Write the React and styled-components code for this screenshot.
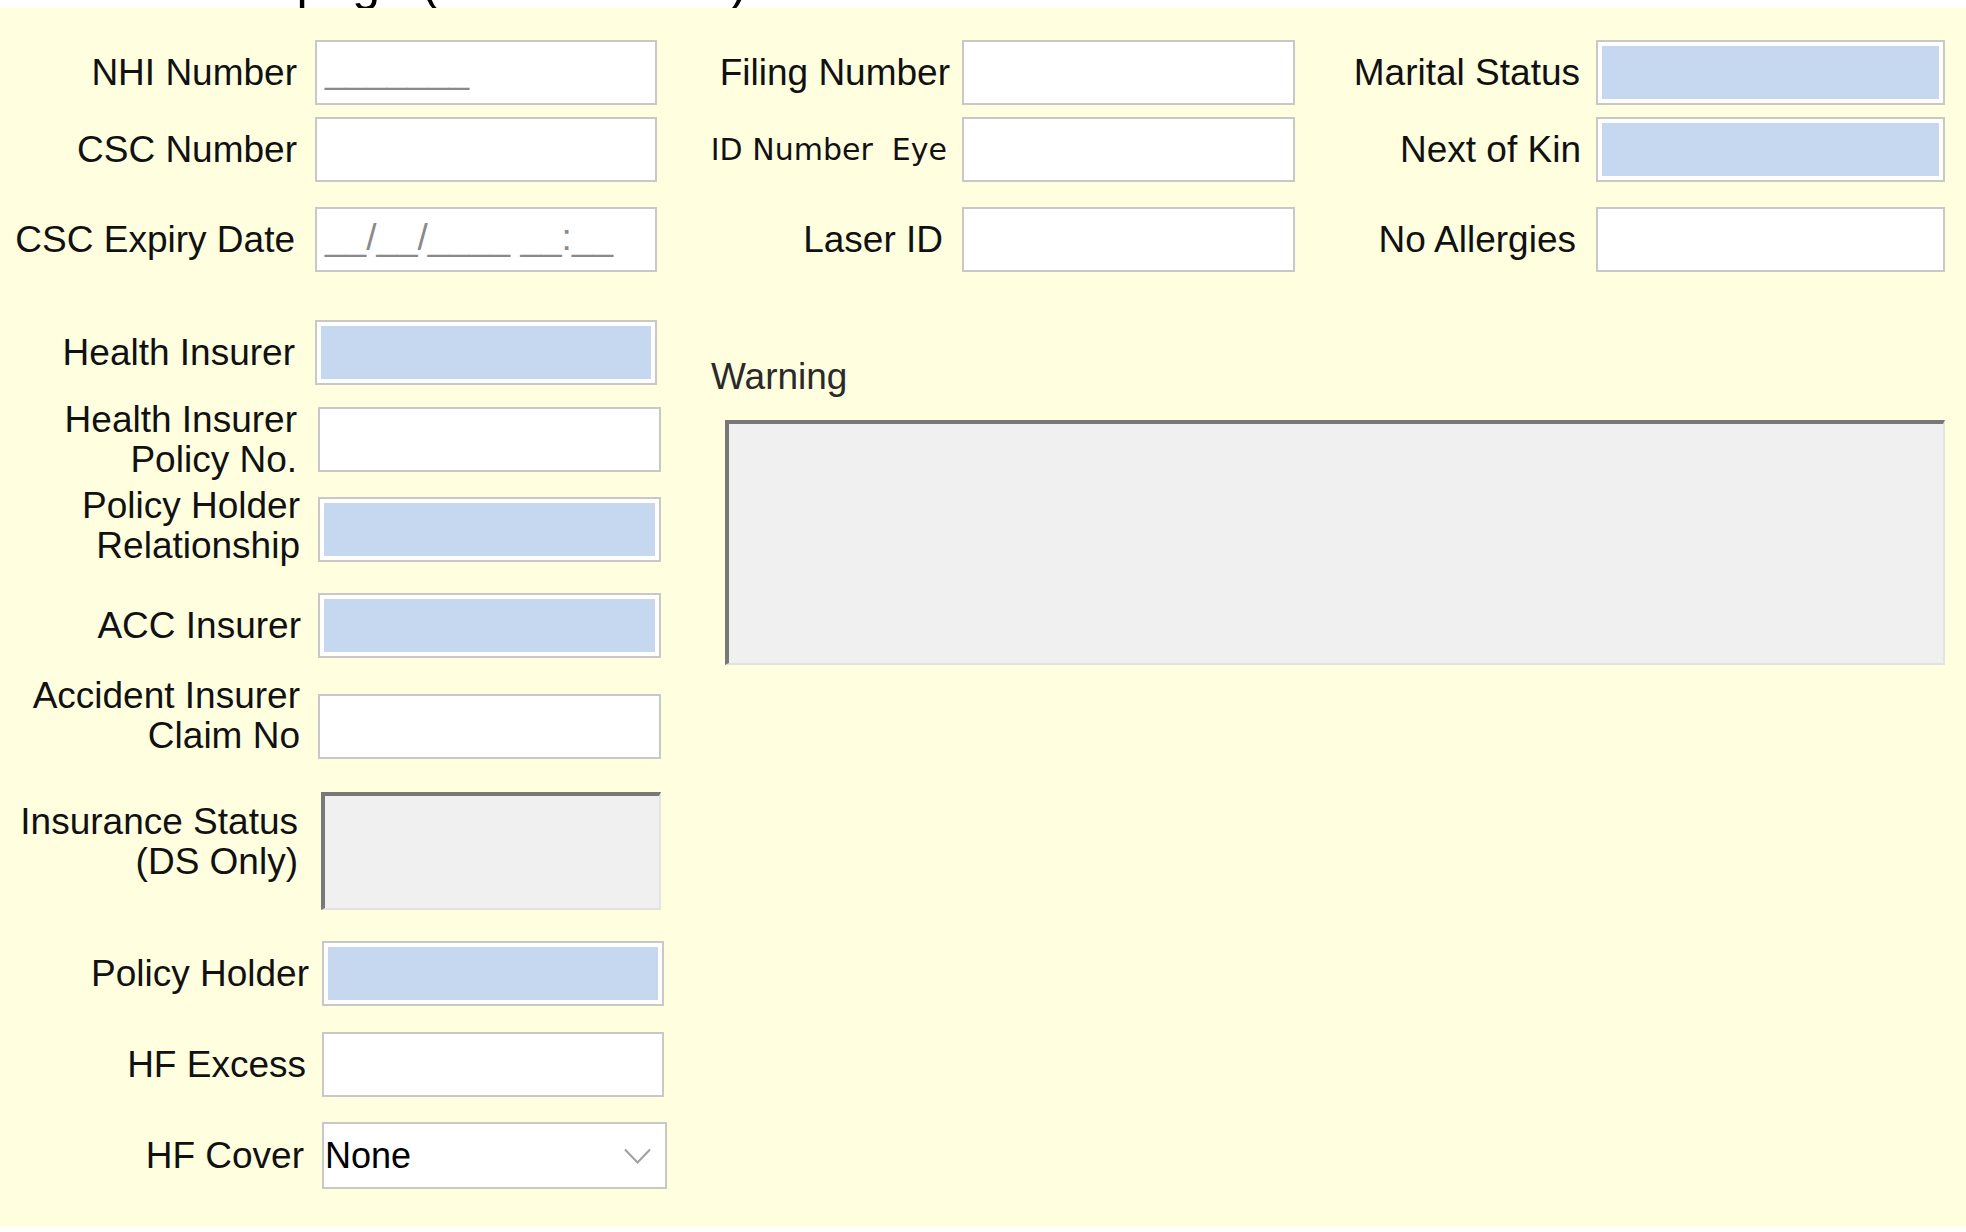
import React from 'react'
import styled, { createGlobalStyle } from 'styled-components'

const GlobalStyle = createGlobalStyle`
  html, body {
    margin: 0;
    padding: 0;
    background: #ffffff;
  }
  body {
    width: 1966px;
    height: 1232px;
    overflow: hidden;
    font-family: "Liberation Sans", Arial, sans-serif;
  }
`

const Screen = styled.div`
  width: 1966px;
  height: 1232px;
  display: flex;
  flex-direction: column;
  background: #ffffff;
`

const Caption = styled.div`
  flex: none;
  height: 8px;
  overflow: hidden;
  background: #ffffff;
`

const CaptionText = styled.div`
  font-size: 50px;
  line-height: 50px;
  margin-top: -42px;
  padding-left: 127px;
  color: #000;
  white-space: nowrap;
`

const Sheet = styled.div`
  flex: none;
  height: 1219px;
  background: #ffffe0;
  display: flex;
`

const LeftColumn = styled.div`
  width: 680px;
  flex: none;
  display: flex;
  flex-direction: column;
  padding-top: 32px;
`

const Main = styled.div`
  flex: 1;
  display: flex;
  flex-direction: column;
`

const TopFields = styled.div`
  display: flex;
  padding-top: 32px;
`

const Group = styled.div`
  display: flex;
  flex-direction: column;
`

// row height is the box height; taller two-line labels overflow evenly
const Row = styled.div`
  display: grid;
  grid-template-columns: ${p => p.$label}px ${p => p.$box}px;
  grid-template-rows: ${p => p.$h || 65}px;
  column-gap: ${p => p.$gap}px;
  align-items: center;
  margin-top: ${p => p.$top || 0}px;
`

const Label = styled.label`
  text-align: right;
  font-family: ${p => (p.$alt ? '"DejaVu Sans", sans-serif' : '"Liberation Sans", Arial, sans-serif')};
  font-size: ${p => (p.$alt ? 30 : 37)}px;
  line-height: 40px;
  color: #111;
  white-space: pre;
  padding-bottom: ${p => p.$lift || 0}px;
`

const TextBox = styled.div`
  box-sizing: border-box;
  height: ${p => p.$h || 65}px;
  border: 2px solid #c8c8c8;
  background: ${p => (p.$lookup ? '#c6d8f0' : '#ffffff')};
  box-shadow: ${p => (p.$lookup ? 'inset 0 0 0 4px #ffffff' : 'none')};
  padding-left: 8px;
  font-size: 37px;
  line-height: 58px;
  color: #8a8a8a;
  white-space: nowrap;
  overflow: hidden;
`

const Sunken = styled.div`
  box-sizing: border-box;
  height: ${p => p.$h}px;
  width: ${p => p.$w || 'auto'};
  background: #f0f0f0;
  border-top: 4px solid #787878;
  border-left: 4px solid #787878;
  border-right: 2px solid #e4e4e4;
  border-bottom: 2px solid #e2e2e2;
`

const Select = styled.div`
  box-sizing: border-box;
  height: 67px;
  border: 2px solid #c8c8c8;
  background: #ffffff;
  display: flex;
  align-items: center;
  justify-content: space-between;
  padding: 0 14px 0 1px;
  font-size: 36px;
  color: #000;
`

const WarningSection = styled.div`
  display: flex;
  flex-direction: column;
`

const WarningLabel = styled.div`
  margin: 85px 0 0 31px;
  font-size: 37px;
  line-height: 40px;
  color: #2a2a2a;
`

const WarningBox = styled(Sunken)`
  margin: 23px 0 0 45px;
`

const Chevron = () => (
  <svg width="27" height="16" viewBox="0 0 27 16" fill="none">
    <polyline points="1,1.5 13.5,14.5 26,1.5" stroke="#a0a0a0" strokeWidth="2" />
  </svg>
)

const left = [
  { label: 'NHI Number', lw: 297, gap: 18, w: 342, top: 0, mask: '_______' },
  { label: 'CSC Number', lw: 297, gap: 18, w: 342, top: 12 },
  { label: 'CSC Expiry Date', lw: 295, gap: 20, w: 342, top: 25, mask: '__/__/____ __:__' },
  { label: 'Health Insurer', lw: 295, gap: 20, w: 342, top: 48, lookup: true },
  { label: ['Health Insurer', 'Policy No.'], lw: 297, gap: 21, w: 343, top: 22 },
  { label: ['Policy Holder', 'Relationship'], lw: 300, gap: 18, w: 343, top: 25, lookup: true, lift: 8 },
  { label: 'ACC Insurer', lw: 301, gap: 17, w: 343, top: 31, lookup: true },
  { label: ['Accident Insurer', 'Claim No'], lw: 300, gap: 18, w: 343, top: 36, lift: 22 },
  { label: ['Insurance Status', '(DS Only)'], lw: 298, gap: 23, w: 340, top: 33, sunken: 118, lift: 18 },
  { label: 'Policy Holder', lw: 309, gap: 13, w: 342, top: 31, lookup: true },
  { label: 'HF Excess', lw: 306, gap: 16, w: 342, top: 26 },
]

const middle = [
  { label: 'Filing Number', lw: 270, gap: 12, top: 0 },
  { label: 'ID Number  Eye', lw: 267, gap: 15, top: 12, alt: true },
  { label: 'Laser ID', lw: 263, gap: 19, top: 25 },
]

const right = [
  { label: 'Marital Status', lw: 285, gap: 16, top: 0, lookup: true },
  { label: 'Next of Kin', lw: 286, gap: 15, top: 12, lookup: true },
  { label: 'No Allergies', lw: 281, gap: 20, top: 25 },
]

const renderLabel = (text, props) => (
  <Label {...props}>
    {Array.isArray(text)
      ? text.map((line, i) => <div key={i}>{line}</div>)
      : text}
  </Label>
)

export default function App() {
  return (
    <>
      <GlobalStyle />
      <Screen>
        <Caption>
          <CaptionText>Patient page (Health Cover)</CaptionText>
        </Caption>
        <Sheet>
          <LeftColumn>
            {left.map(f => (
              <Row
                key={String(f.label)}
                $label={f.lw}
                $box={f.w}
                $gap={f.gap}
                $top={f.top}
                $h={f.sunken || 65}
              >
                {renderLabel(f.label, { $lift: f.lift })}
                {f.sunken ? (
                  <Sunken $h={f.sunken} />
                ) : (
                  <TextBox $lookup={f.lookup}>{f.mask}</TextBox>
                )}
              </Row>
            ))}
            <Row $label={304} $box={345} $gap={18} $top={25} $h={67}>
              <Label>HF Cover</Label>
              <Select>
                <span>None</span>
                <Chevron />
              </Select>
            </Row>
          </LeftColumn>

          <Main>
            <TopFields>
              <Group>
                {middle.map(f => (
                  <Row key={f.label} $label={f.lw} $box={333} $gap={f.gap} $top={f.top}>
                    {renderLabel(f.label, { $alt: f.alt })}
                    <TextBox />
                  </Row>
                ))}
              </Group>
              <Group>
                {right.map(f => (
                  <Row key={f.label} $label={f.lw} $box={349} $gap={f.gap} $top={f.top}>
                    {renderLabel(f.label, {})}
                    <TextBox $lookup={f.lookup} />
                  </Row>
                ))}
              </Group>
            </TopFields>

            <WarningSection>
              <WarningLabel>Warning</WarningLabel>
              <WarningBox $h={245} $w="1220px" />
            </WarningSection>
          </Main>
        </Sheet>
      </Screen>
    </>
  )
}
